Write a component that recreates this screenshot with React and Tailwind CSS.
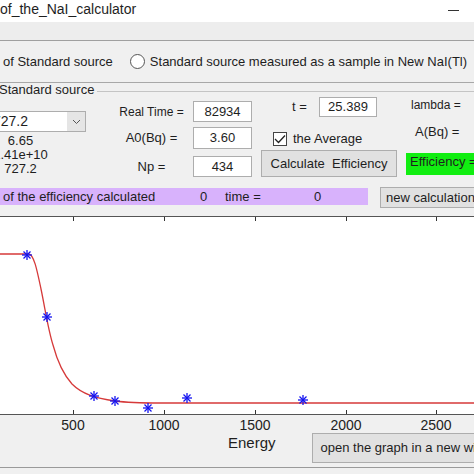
import React from "react";

const ticks = [
  { x: 73, label: "500" },
  { x: 164, label: "1000" },
  { x: 255, label: "1500" },
  { x: 346, label: "2000" },
  { x: 436, label: "2500" },
];

// measured points (svg coords)
const points = [
  [27, 47],
  [47, 109],
  [94, 188],
  [115, 193],
  [148, 200],
  [187, 190],
  [303, 192],
];

const Star = ({ x, y }) => (
  <g stroke="#1414f0" strokeWidth="1.3">
    <line x1={x - 5} y1={y} x2={x + 5} y2={y} />
    <line x1={x} y1={y - 5} x2={x} y2={y + 5} />
    <line x1={x - 3.5} y1={y - 3.5} x2={x + 3.5} y2={y + 3.5} />
    <line x1={x - 3.5} y1={y + 3.5} x2={x + 3.5} y2={y - 3.5} />
  </g>
);

const Chart = () => (
  <svg width="474" height="224" className="block shrink-0">
    <rect x="0" y="8" width="474" height="198" fill="#ffffff" />
    <line x1="0" y1="8.5" x2="474" y2="8.5" stroke="#555" />
    <line x1="0" y1="206.5" x2="474" y2="206.5" stroke="#555" />
    {ticks.map((t) => (
      <g key={t.x} stroke="#333">
        <line x1={t.x + 0.5} y1="9" x2={t.x + 0.5} y2="13" />
        <line x1={t.x + 0.5} y1="206" x2={t.x + 0.5} y2="202" />
      </g>
    ))}
    <path
      d="M0,46 L29,46 C34,47 37,62 41,81 C45,100 48,121 53,137 C57,152 63,166 72,176 C82,186 95,190 115,193 C130,195 145,195 160,195 L474,195"
      fill="none"
      stroke="#d63a3a"
      strokeWidth="1.3"
    />
    {points.map(([x, y]) => (
      <Star key={x} x={x} y={y} />
    ))}
    {ticks.map((t) => (
      <text
        key={t.label}
        x={t.x}
        y="222"
        textAnchor="middle"
        fontSize="14"
        fill="#222"
        fontFamily="Liberation Sans, Arial, sans-serif"
      >
        {t.label}
      </text>
    ))}
  </svg>
);

const Box = ({ children, className = "" }) => (
  <div
    className={
      "bg-white border border-[#adadad] flex items-center justify-center shrink-0 " +
      className
    }
  >
    {children}
  </div>
);

export default function App() {
  return (
    <div className="w-[474px] h-[474px] overflow-hidden bg-[#f0f0f0] font-['Liberation_Sans',Arial,sans-serif] text-[13px] text-[#1e1e1e] flex flex-col">
      {/* title bar */}
      <div className="h-[22px] bg-white flex items-start justify-between shrink-0">
        <span className="text-[14px] leading-[16px] mt-[1px] whitespace-nowrap">
          of_the_NaI_calculator
        </span>
        <span className="w-[11px] h-[1px] bg-[#333] mt-[10px] mr-[15px]" />
      </div>

      {/* toolbar band */}
      <div className="h-[19px] bg-[#ededed] border-b border-[#a0a0a0] shrink-0" />

      {/* source type */}
      <div className="h-[42px] flex items-center border-b border-[#a8a8a8] shrink-0 whitespace-nowrap">
        <span className="ml-[3px]">of Standard source</span>
        <span className="ml-[17px] w-[15px] h-[15px] rounded-full border border-[#555] bg-white shrink-0" />
        <span className="ml-[5px]">Standard source measured as a sample in New NaI(Tl)</span>
      </div>

      {/* group header */}
      <div className="h-[14px] flex items-center shrink-0">
        <span className="-ml-[1px] whitespace-nowrap">Standard source</span>
        <span className="flex-1 h-px bg-[#c4c4c4] ml-[3px] mt-[2px]" />
      </div>

      {/* inputs */}
      <div className="h-[91px] flex shrink-0 whitespace-nowrap leading-[16px]">
        {/* combo + values */}
        <div className="w-[86px] shrink-0 flex flex-col">
          <div className="mt-[14px] h-[21px] flex border border-[#adadad] bg-white border-l-0">
            <span className="flex-1 -ml-[7px] leading-[19px] text-[14px]">727.2</span>
            <span className="w-[18px] bg-[#e5e5e5] flex items-center justify-center">
              <svg width="9" height="6" viewBox="0 0 9 6">
                <path d="M1 1 L4.5 4.5 L8 1" fill="none" stroke="#555" strokeWidth="1" />
              </svg>
            </span>
          </div>
          <div className="w-[41px] mt-[2px] flex flex-col items-center leading-[14px]">
            <span>6.65</span>
            <span>1.41e+10</span>
            <span>727.2</span>
          </div>
        </div>

        {/* labels + boxes */}
        <div className="ml-[24px] shrink-0 flex flex-col">
          <div className="mt-[4px] h-[21px] flex items-center">
            <span className="w-[83px] text-center text-[12px]">Real Time =</span>
            <Box className="w-[59px] h-[21px]">82934</Box>
          </div>
          <div className="mt-[5px] h-[22px] flex items-center">
            <span className="w-[83px] text-center">A0(Bq) =</span>
            <Box className="w-[59px] h-[22px]">3.60</Box>
          </div>
          <div className="mt-[7px] h-[21px] flex items-center">
            <span className="w-[83px] text-center">Np =</span>
            <Box className="w-[59px] h-[21px]">434</Box>
          </div>
        </div>

        {/* t / average / calculate */}
        <div className="ml-[9px] w-[136px] shrink-0 flex flex-col">
          <div className="h-[20px] flex items-center">
            <span className="ml-[31px] w-[27px]">t =</span>
            <Box className="w-[58px] h-[20px]">25.389</Box>
          </div>
          <div className="mt-[15px] h-[14px] flex items-center">
            <span className="ml-[12px] w-[14px] h-[14px] border border-[#444] bg-white flex items-center justify-center shrink-0">
              <svg width="12" height="10" viewBox="0 0 12 10">
                <path d="M1 5 L4.5 8.5 L11 1.5" fill="none" stroke="#222" strokeWidth="1.3" />
              </svg>
            </span>
            <span className="ml-[6px] leading-[14px]">the Average</span>
          </div>
          <button className="mt-[4px] h-[27px] w-[136px] bg-[#e1e1e1] border border-[#adadad] text-[13px] text-[#1e1e1e] whitespace-pre">
            Calculate  Efficiency
          </button>
        </div>

        {/* lambda / A / efficiency */}
        <div className="ml-[9px] shrink-0 flex flex-col">
          <span className="ml-[5px] text-[12px]">lambda =</span>
          <span className="mt-[11px] ml-[9px]">A(Bq) =</span>
          <div className="mt-[13px] h-[22px] w-[80px] bg-[#11ee11] pl-[4px] leading-[18px]">
            Efficiency =
          </div>
        </div>
      </div>

      {/* result row */}
      <div className="h-[20px] flex items-start shrink-0 whitespace-nowrap">
        <div className="w-[368px] shrink-0 h-[17px] bg-[#d8b2fc] flex items-center">
          <span className="ml-[3px] w-[197px]">of the efficiency calculated</span>
          <span className="w-[25px]">0</span>
          <span className="w-[89px]">time =</span>
          <span>0</span>
        </div>
        <button className="ml-[12px] -mt-[1px] h-[21px] w-[100px] shrink-0 bg-[#e1e1e1] border border-[#adadad] text-left pl-[5px] text-[13px] text-[#1e1e1e] whitespace-nowrap overflow-hidden">
          new calculation
        </button>
      </div>

      <Chart />

      {/* bottom row */}
      <div className="h-[36px] flex items-start border-b border-[#9a9a9a] shrink-0 whitespace-nowrap">
        <span className="ml-[228px] mt-[2px] text-[15px] leading-[18px]">Energy</span>
        <button className="ml-[36px] mt-[1px] h-[30px] w-[175px] shrink-0 bg-[#e1e1e1] border border-[#adadad] text-left pl-[8px] text-[13px] text-[#1e1e1e] overflow-hidden">
          open the graph in a new window
        </button>
      </div>
    </div>
  );
}
